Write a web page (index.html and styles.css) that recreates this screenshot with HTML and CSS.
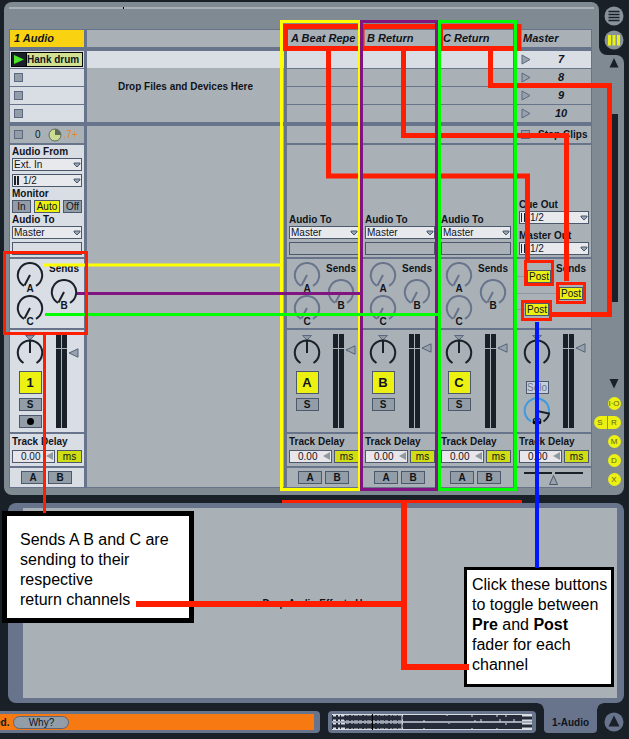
FILE: index.html
```
<!DOCTYPE html>
<html lang="en">
<head>
<meta charset="utf-8">
<title>Sends and Returns</title>
<link rel="stylesheet" href="styles.css">
</head>
<body>
<svg class="defs" aria-hidden="true">
  <symbol id="send" viewBox="0 0 28 30">
    <path d="M8 23.8A12.2 12.2 0 1 1 20 23.8M14 13L8.5 23.5" fill="none" stroke="currentColor" stroke-width="2"/>
  </symbol>
  <symbol id="pan" viewBox="0 0 28 33">
    <path d="M9.500 1.500H18.500L14 6Z" fill="#8f99a4" stroke="#5c6880"/>
    <path d="M7.500 29A12.200 12.200 0 1 1 20.500 29M14 7V19" fill="none" stroke="#1a2028" stroke-width="2"/>
  </symbol>
  <symbol id="down" viewBox="0 0 8 6"><path d="M1 1H7V2L4 5L1 2Z" fill="#9aa5b2" stroke="#4c586c"/></symbol>
  <symbol id="fader" viewBox="0 0 11 10"><path d="M1 5L10 .8V9.200Z" fill="#97a2ac" stroke="#566278"/></symbol>
  <symbol id="launch" viewBox="0 0 10 11"><path d="M1 1L9 5.500L1 10Z" fill="#97a2ac" stroke="#5c6880"/></symbol>
  <symbol id="nudge" viewBox="0 0 8 10"><path d="M0 5L7 1V9Z" fill="#8f99a2"/></symbol>
</svg>

<main class="app">
  <section class="session">
    <div class="board">
      <div class="overview"><i></i></div>
      <div class="tracks">

        <article class="track track-input">
          <h2 class="cell head">1 Audio</h2>
          <div class="cell slot"><div class="clip"><button class="play" aria-label="Play clip"><svg viewBox="0 0 14 13"><path d="M2 2L12 6.500L2 11Z" fill="#4ee62a"/></svg></button><span>Hank drum v</span></div></div>
          <div class="cell slot"><button class="stop" aria-label="Stop"></button></div>
          <div class="cell slot"><button class="stop" aria-label="Stop"></button></div>
          <div class="cell slot last"><button class="stop" aria-label="Stop"></button></div>
          <div class="cell status"><button class="stop" aria-label="Stop track"></button><span class="count">0</span><svg class="pie" viewBox="0 0 14 14"><circle cx="7" cy="7" r="6" fill="#ccdc92" stroke="#5f6c5c"/><path d="M7 7V1A6 6 0 0 1 13 7Z" fill="#5f6c5c"/></svg><span class="bars">.7+</span></div>
          <div class="cell io">
            <label for="from">Audio From</label>
            <div class="pick"><select id="from"><option>Ext. In</option></select><svg><use href="#down"/></svg></div>
            <div class="pick metered next"><select aria-label="Input channel"><option>1/2</option></select><svg><use href="#down"/></svg><i></i></div>
            <label>Monitor</label>
            <div class="monitor"><button>In</button><button class="on">Auto</button><button>Off</button></div>
            <label for="to1">Audio To</label>
            <div class="pick"><select id="to1"><option>Master</option></select><svg><use href="#down"/></svg></div>
            <div class="blank"></div>
          </div>
          <div class="cell sends">
            <div class="left"><div class="knob"><svg><use href="#send"/></svg><b>A</b></div><div class="knob"><svg><use href="#send"/></svg><b>C</b></div></div>
            <div class="right"><h3>Sends</h3><div class="knob"><svg><use href="#send"/></svg><b>B</b></div></div>
          </div>
          <div class="cell mix">
            <div class="strip"><svg class="pan"><use href="#pan"/></svg><button class="active">1</button><button class="small">S</button><button class="small" aria-label="Arm"><i class="dot"></i></button></div>
            <div class="meter"></div><svg class="fader low"><use href="#fader"/></svg>
          </div>
          <div class="cell delay"><label for="d1">Track Delay</label><div class="row"><div class="num"><input id="d1" value="0.00"><svg><use href="#nudge"/></svg></div><button>ms</button></div></div>
          <div class="cell cross"><button>A</button><button>B</button></div>
        </article>

        <div class="drop">
          <div class="cell head"></div>
          <div class="scene"></div>
          <div class="files">Drop Files and Devices Here</div>
          <div class="rest"></div>
        </div>

        <article class="track">
          <h2 class="cell head">A Beat Repe</h2>
          <div class="cell slot lit"></div><div class="cell slot"></div><div class="cell slot"></div><div class="cell slot last"></div>
          <div class="cell status"></div>
          <div class="cell io">
            <label for="toa">Audio To</label>
            <div class="pick"><select id="toa"><option>Master</option></select><svg><use href="#down"/></svg></div>
            <div class="blank"></div>
          </div>
          <div class="cell sends">
            <div class="left"><div class="knob"><svg><use href="#send"/></svg><b>A</b></div><div class="knob"><svg><use href="#send"/></svg><b>C</b></div></div>
            <div class="right"><h3>Sends</h3><div class="knob"><svg><use href="#send"/></svg><b>B</b></div></div>
          </div>
          <div class="cell mix">
            <div class="strip"><svg class="pan"><use href="#pan"/></svg><button class="active">A</button><button class="small">S</button></div>
            <div class="meter"></div><svg class="fader mid"><use href="#fader"/></svg>
          </div>
          <div class="cell delay"><label for="da">Track Delay</label><div class="row"><div class="num"><input id="da" value="0.00"><svg><use href="#nudge"/></svg></div><button>ms</button></div></div>
          <div class="cell cross"><button>A</button><button>B</button></div>
        </article>

        <article class="track">
          <h2 class="cell head">B Return</h2>
          <div class="cell slot lit"></div><div class="cell slot"></div><div class="cell slot"></div><div class="cell slot last"></div>
          <div class="cell status"></div>
          <div class="cell io">
            <label for="tob">Audio To</label>
            <div class="pick"><select id="tob"><option>Master</option></select><svg><use href="#down"/></svg></div>
            <div class="blank"></div>
          </div>
          <div class="cell sends">
            <div class="left"><div class="knob"><svg><use href="#send"/></svg><b>A</b></div><div class="knob"><svg><use href="#send"/></svg><b>C</b></div></div>
            <div class="right"><h3>Sends</h3><div class="knob"><svg><use href="#send"/></svg><b>B</b></div></div>
          </div>
          <div class="cell mix">
            <div class="strip"><svg class="pan"><use href="#pan"/></svg><button class="active">B</button><button class="small">S</button></div>
            <div class="meter"></div><svg class="fader"><use href="#fader"/></svg>
          </div>
          <div class="cell delay"><label for="db">Track Delay</label><div class="row"><div class="num"><input id="db" value="0.00"><svg><use href="#nudge"/></svg></div><button>ms</button></div></div>
          <div class="cell cross"><button>A</button><button>B</button></div>
        </article>

        <article class="track">
          <h2 class="cell head">C Return</h2>
          <div class="cell slot lit"></div><div class="cell slot"></div><div class="cell slot"></div><div class="cell slot last"></div>
          <div class="cell status"></div>
          <div class="cell io">
            <label for="toc">Audio To</label>
            <div class="pick"><select id="toc"><option>Master</option></select><svg><use href="#down"/></svg></div>
            <div class="blank"></div>
          </div>
          <div class="cell sends">
            <div class="left"><div class="knob"><svg><use href="#send"/></svg><b>A</b></div><div class="knob"><svg><use href="#send"/></svg><b>C</b></div></div>
            <div class="right"><h3>Sends</h3><div class="knob"><svg><use href="#send"/></svg><b>B</b></div></div>
          </div>
          <div class="cell mix">
            <div class="strip"><svg class="pan"><use href="#pan"/></svg><button class="active">C</button><button class="small">S</button></div>
            <div class="meter"></div><svg class="fader"><use href="#fader"/></svg>
          </div>
          <div class="cell delay"><label for="dc">Track Delay</label><div class="row"><div class="num"><input id="dc" value="0.00"><svg><use href="#nudge"/></svg></div><button>ms</button></div></div>
          <div class="cell cross"><button>A</button><button>B</button></div>
        </article>

        <article class="track track-master">
          <h2 class="cell head">Master</h2>
          <div class="cell slot lit"><svg><use href="#launch"/></svg><em>7</em></div>
          <div class="cell slot"><svg><use href="#launch"/></svg><em>8</em></div>
          <div class="cell slot"><svg><use href="#launch"/></svg><em>9</em></div>
          <div class="cell slot last"><svg><use href="#launch"/></svg><em>10</em></div>
          <div class="cell status"><button class="stop" aria-label="Stop all clips"></button><b>Stop Clips</b></div>
          <div class="cell io">
            <label for="cue">Cue Out</label>
            <div class="pick metered wide"><select id="cue"><option>1/2</option></select><svg><use href="#down"/></svg><i></i></div>
            <label class="spaced" for="out">Master Out</label>
            <div class="pick metered wide"><select id="out"><option>1/2</option></select><svg><use href="#down"/></svg><i></i></div>
          </div>
          <div class="cell sends posts">
            <h3>Sends</h3>
            <div class="post"><button>Post</button></div>
            <div class="post far"><button>Post</button></div>
            <div class="post near"><button>Post</button></div>
          </div>
          <div class="cell mix">
            <div class="strip"><svg class="pan"><use href="#pan"/></svg><button class="solo">Solo</button>
              <svg class="cue" viewBox="0 0 28 30"><path d="M8 24.300A12.200 12.200 0 1 1 25.800 16" fill="none" stroke="#3f9ade" stroke-width="2"/><path d="M14 14L26 16.500Q25.500 21 20.500 24.500" fill="none" stroke="#1a2028" stroke-width="2"/><path d="M10.500 25V22.500Q14 19.500 17.500 22.500V25" fill="none" stroke="#1a2028" stroke-width="1.500"/><circle cx="11.500" cy="25.500" r="1.800"/><circle cx="16.500" cy="25.500" r="1.800"/></svg>
            </div>
            <div class="meter"></div><svg class="fader"><use href="#fader"/></svg>
          </div>
          <div class="cell delay"><label for="dm">Track Delay</label><div class="row"><div class="num"><input id="dm" value="0.00"><svg><use href="#nudge"/></svg></div><button>ms</button></div></div>
          <div class="cell cross"><svg class="xfade" viewBox="0 0 60 14"><path d="M0 2H28M31 2H59" stroke="#1a2028" stroke-width="2"/><path d="M25.500 13.500L29.500 4.500L33.500 13.500Z" fill="#97a2ac" stroke="#4c586c"/></svg></div>
        </article>
      </div>
    </div>

    <aside class="side">
      <div class="views">
        <button aria-label="Arrangement view"><svg viewBox="0 0 20 20"><circle cx="10" cy="10" r="9.500" fill="#87929b"/><path d="M4.500 5.500H15.500M4.500 8.500H15.500M4.500 11.500H15.500M4.500 14.500H15.500" stroke="#1a2028" stroke-width="1.500"/></svg></button>
        <button aria-label="Session view"><svg viewBox="0 0 20 20"><circle cx="10" cy="10" r="9.500" fill="#87929b"/><path d="M5.500 5V15.500M10 5V15.500M14.500 5V15.500" stroke="#eaf012" stroke-width="3"/></svg></button>
      </div>
      <div class="scroll">
        <svg class="arrow" viewBox="0 0 10 10"><path d="M5 0L9.500 9.500H.5Z" fill="#1a2028"/></svg>
        <div class="thumb"></div>
        <svg class="arrow" viewBox="0 0 10 10"><path d="M5 9.500L9.500 0H.5Z" fill="#1a2028"/></svg>
        <div class="toggles">
          <button>I·O</button>
          <div class="pair"><button>S</button><button>R</button></div>
          <button>M</button><button>D</button><button>X</button>
        </div>
      </div>
    </aside>
  </section>

  <section class="devices"><div>Drop Audio Effects Here</div></section>

  <footer class="foot">
    <div class="info"><div><b>ed.</b><button>Why?</button></div></div>
    <div class="wave"><svg viewBox="0 0 200 16" preserveAspectRatio="none">
      <path d="M0 0H200V16H0Z" fill="#d9dde4"/>
      <path d="M0 4H200M0 12H200" stroke="#262c3a" stroke-width="3"/>
      <path d="M12 4H70M14 12H70" stroke="#262c3a" stroke-width="5"/>
      <path d="M0 4H70M0 12H70" stroke="#262c3a" stroke-width="6" stroke-dasharray="1 3 2 2 1 4"/>
      <path d="M71 4H190M71 12H190" stroke="#262c3a" stroke-width="6"/>
      <path d="M0 8H200" stroke="#68738c"/>
      <path d="M92 6V8M115 1V2M117 9V10M140 1V3M143 6V8M149 5V8M165 1V3M168 5V8M174 0V3M182 5V8M174 9V11M70 0V16M92 14V16M140 14V16M165 14V16" stroke="#d9dde4"/>
      <path d="M40.500 0V16" stroke="#000"/>
    </svg></div>
    <div class="tab">1-Audio</div>
    <button class="hide" aria-label="Hide device view"><svg viewBox="0 0 20 20"><circle cx="10" cy="10" r="9.500" fill="#68738c"/><path d="M10 3.500L15.500 14.500H4.500Z" fill="#1a2028"/></svg></button>
  </footer>

  <p class="note note-sends">Sends A B and C are<br>sending to their<br>respective<br>return channels</p>
  <p class="note note-post">Click these buttons<br>to toggle between<br><b>Pre</b> and <b>Post</b><br>fader for each<br>channel</p>

  <svg class="marks" viewBox="0 0 629 739" fill="none" aria-hidden="true">
    <g stroke="#ff1e00">
      <path d="M283 26.500H521M283 48.500H521M285.500 24V51M519 24V51" stroke-width="5"/>
      <path d="M363.500 29V46M442 29V46" stroke-width="2"/>
      <path d="M328.500 51V176H527.500V262M403.500 51V135.500H566.500V281M490.500 51V85.500H609.500V314.500H551" stroke-width="5"/>
      <path d="M282 501.500H522" stroke-width="3"/>
      <path d="M404 503V667H469M136 604H404" stroke-width="6"/>
    </g>
    <path d="M281.500 21.500H359.500V489.500H281.500ZM43 265H281" stroke="#ffff00" stroke-width="3"/>
    <path d="M361.500 21.500H436.500V489.500H361.500ZM77 293.500H361" stroke="#821482" stroke-width="3"/>
    <path d="M439.500 21.500H515.500V489.500H439.500Z" stroke="#00ff00" stroke-width="3"/>
    <path d="M45 314.500H439" stroke="#00ff00" stroke-width="3"/>
    <path d="M4.500 252.500H86.500V333.500H4.500ZM44.500 335V513M525.500 261.500H552.500V284.500H525.500ZM557.500 283.500H584.500V302.500H557.500ZM522.500 301.500H550.500V319.500H522.500Z" stroke="#ff1e00" stroke-width="3"/>
    <path d="M537 322V568" stroke="#0018ff" stroke-width="4"/>
  </svg>
</main>
</body>
</html>
```
FILE: styles.css
```
:root {
  --dark: #1a2028;
  --panel: #7f8a93;
  --slate: #68738c;
  --gray: #a9b1b7;
  --light: #d9dde4;
  --line: #4c586c;
  --button: #939da7;
  --yellow: #ecf112;
}
* { box-sizing: border-box; }
html { background: var(--dark); }
body {
  margin: 0;
  color: #10141c;
  font: 10px/13px "Liberation Sans", Arial, sans-serif;
}
h2, h3, p { margin: 0; font-size: 10px; }
button, input, select {
  margin: 0;
  padding: 0;
  border: 1px solid var(--line);
  border-radius: 0;
  background: var(--button);
  color: #10141c;
  font: inherit;
}
svg { display: block; flex: none; }
.defs { position: absolute; width: 0; height: 0; }
.app { position: relative; padding-top: 2px; overflow: hidden; }

/* Session view */
.session { display: flex; padding-left: 4px; }
.board {
  flex: 1;
  min-width: 0;
  padding: 5px 7px 7px 5px;
  background: var(--panel);
  border-radius: 8px 8px 0 8px;
}
.overview { height: 2px; margin: 0 -2px 20px 0; padding-left: 114px; background: var(--gray); }
.overview i { display: block; width: 1px; height: 2px; background: #000; }
.tracks { display: flex; gap: 2px; padding: 1px; background: var(--slate); }
.track { flex: none; width: 74px; }
.track-input { margin-right: 1px; }
.track-master { margin-left: 2px; }
.cell { background: var(--gray); margin-bottom: 2px; }
.cell:last-child { margin-bottom: 0; }
.cell.head {
  height: 17px;
  margin-bottom: 4px;
  padding-left: 4px;
  font-style: italic;
  font-size: 11px;
  line-height: 17px;
  white-space: nowrap;
}
.track-master .head { padding-left: 6px; }
.track-input .cell { background: var(--light); }
.track-input .head { background: #f9d311; }
.track-input .status { background: var(--gray); }
.cell.slot { display: flex; align-items: center; height: 17px; margin-bottom: 1px; padding-left: 4px; }
.cell.slot.last { margin-bottom: 4px; }
.slot.lit { background: var(--light); }
.slot svg { width: 10px; height: 11px; }
.slot em { width: 66px; text-align: center; font-size: 11px; font-weight: bold; }
.stop { flex: none; width: 9px; height: 9px; border-color: #5c6880; }
.clip {
  display: flex;
  width: 72px;
  height: 15px;
  margin-left: -3px;
  border: 1px solid #000;
  background: #d2e092;
  font-weight: bold;
  white-space: nowrap;
  overflow: hidden;
}
.clip .play { flex: none; width: 15px; border: 0; border-right: 1px solid #000; background: var(--dark); }
.clip .play svg { width: 14px; height: 13px; }
.status { display: flex; align-items: center; height: 17px; padding-left: 4px; }
.count { margin-left: 12px; }
.pie { width: 14px; height: 14px; margin: 0 2px 0 7px; }
.bars { color: #f08028; }
.status b { margin-left: 8px; white-space: nowrap; }

.drop { flex: 1; min-width: 0; display: flex; flex-direction: column; margin-right: 1px; }
.scene { height: 17px; background: var(--light); }
.files {
  height: 54px;
  margin-bottom: 4px;
  padding-top: 12px;
  background: var(--gray);
  font-weight: bold;
  text-align: center;
}
.rest { flex: 1; background: var(--gray); }

/* Routing */
.io { display: flex; flex-direction: column; justify-content: flex-end; height: 112px; padding: 0 2px 2px; }
.io label, .delay label { font-weight: bold; white-space: nowrap; }
.io .spaced { margin-top: 5px; }
.pick { position: relative; height: 13px; }
.pick.next { margin-top: 3px; }
.pick select {
  display: block;
  width: 100%;
  height: 13px;
  padding-left: 1px;
  background: #e8e9ec;
  line-height: 11px;
  appearance: none;
}
.pick svg { position: absolute; right: 1px; top: 4px; width: 8px; height: 6px; pointer-events: none; }
.pick.metered select { padding-left: 10px; }
.pick i { position: absolute; left: 2px; top: 2px; width: 5px; height: 9px; border: solid var(--dark); border-width: 0 2px; }
.pick.wide i { border-width: 0 2px 0 1px; }
.monitor { display: flex; justify-content: space-between; }
.monitor button { width: 19px; height: 13px; line-height: 11px; }
.monitor .on { width: 26px; background: var(--yellow); }
.blank { height: 13px; margin-top: 3px; border: 1px solid var(--line); }

/* Sends */
.sends { display: flex; height: 69px; }
.sends .left { width: 40px; padding: 3px 6px; }
.sends .right { width: 28px; }
.sends h3 { height: 20px; line-height: 20px; white-space: nowrap; }
.sends .right h3 { display: flex; justify-content: center; }
.knob { width: 28px; height: 33px; color: var(--slate); text-align: center; }
.track-input .knob { color: var(--dark); }
.knob svg { width: 28px; height: 30px; }
.knob b { display: block; margin-top: -10px; line-height: 13px; color: #10141c; }
.sends.posts { display: block; }
.posts h3 { height: 11px; padding-left: 39px; }
.posts .post {
  display: flex;
  height: 13px;
  padding-left: 10px;
  background: linear-gradient(#8f99a6, #8f99a6) 0 6px / 12px 1px no-repeat;
}
.post button { width: 24px; background: var(--yellow); line-height: 11px; }
.posts .far { margin-top: 4px; padding-left: 42px; background-size: 42px 1px; }
.posts .near { margin-top: 3px; padding-left: 8px; background-size: 8px 1px; }

/* Mixer */
.mix { display: flex; height: 102px; padding: 4px 0 4px 6px; }
.strip { display: flex; flex-direction: column; align-items: center; width: 28px; margin-right: 12px; }
.pan { width: 28px; height: 33px; }
.strip button { flex: none; width: 23px; height: 13px; margin-top: 4px; line-height: 11px; font-weight: bold; }
.strip .active { height: 23px; background: var(--yellow); font-size: 13px; }
.strip .solo { margin-top: 14px; background: #c4cede; color: #6c7688; font-weight: normal; }
.strip .cue { width: 28px; height: 30px; margin-top: 3px; }
.dot { display: block; width: 7px; height: 7px; margin: auto; border-radius: 50%; background: #000; }
.meter {
  width: 11px;
  background:
    linear-gradient(var(--gray), var(--gray)) 0 14px / 11px 1px no-repeat,
    linear-gradient(90deg, var(--dark) 5px, var(--gray) 5px 6px, var(--dark) 6px);
}
.fader { width: 11px; height: 10px; margin: 9px 0 0 1px; }
.fader.mid { margin-top: 11px; }
.fader.low { margin-top: 14px; }

.delay { height: 32px; padding: 1px 2px; }
.delay label { display: block; height: 15px; }
.delay .row { display: flex; justify-content: space-between; }
.num { position: relative; width: 43px; }
.num input { display: block; width: 43px; height: 13px; padding-left: 8px; background: #e8e6ea; }
.num svg { position: absolute; right: 1px; top: 1px; width: 8px; height: 10px; }
.delay button { width: 25px; height: 13px; line-height: 11px; background: #d0dc14; }
.cross { display: flex; gap: 3px; height: 19px; padding: 3px 0 0 11px; }
.cross button { width: 24px; height: 13px; line-height: 11px; font-weight: bold; }
.xfade { width: 60px; height: 14px; margin-left: -4px; }

/* Side column */
.side { display: flex; flex-direction: column; width: 30px; margin-top: -2px; background: linear-gradient(var(--panel), var(--panel)) 0 100% / 10px 450px no-repeat; }
.views {
  display: flex;
  flex-direction: column;
  align-items: center;
  gap: 4px;
  height: 55px;
  padding-top: 6px;
  background: var(--dark);
  border-bottom-left-radius: 8px;
}
.views button, .hide { width: 20px; height: 20px; border: 0; background: none; }
.scroll {
  flex: 1;
  display: flex;
  flex-direction: column;
  align-items: center;
  width: 25px;
  padding: 3px 0 0 5px;
  background: var(--panel);
  border-radius: 0 8px 8px 0;
}
.arrow { width: 10px; height: 10px; }
.thumb { width: 8px; height: 188px; margin: 46px 0 77px; background: var(--dark); }
.toggles { display: flex; flex-direction: column; align-items: flex-end; gap: 6px; margin-top: 8px; }
.toggles button {
  width: 13px;
  height: 13px;
  border: 0;
  border-radius: 50%;
  background: var(--yellow);
  color: #5c6420;
  font-size: 8px;
  line-height: 13px;
  text-align: center;
}
.pair { display: flex; gap: 1px; margin-left: -14px; }
.pair button:first-child { border-radius: 7px 0 0 7px; }
.pair button:last-child { border-radius: 0 7px 7px 0; }

/* Device view and footer */
.devices { margin: 8px 5px 0 8px; padding: 5px 7px 5px 15px; background: var(--slate); border-radius: 8px; }
.devices div {
  display: flex;
  align-items: center;
  justify-content: center;
  height: 190px;
  background: var(--gray);
  font-weight: bold;
}
.foot { display: flex; align-items: flex-end; height: 36px; padding-bottom: 6px; }
.info { flex: 1; padding: 3px 6px 3px 0; height: 22px; margin-right: 8px; background: var(--slate); border-radius: 0 4px 4px 0; }
.info div { display: flex; align-items: center; height: 16px; margin-left: -5px; background: #f77912; }
.info button { width: 56px; height: 13px; margin-left: 4px; border-color: #5c6478; border-radius: 7px; line-height: 11px; }
.wave { width: 208px; height: 22px; padding: 3px 4px; background: var(--slate); border-radius: 4px; }
.wave svg { width: 200px; height: 16px; }
.tab {
  position: relative;
  width: 53px;
  height: 30px;
  margin: 0 7px 0 8px;
  padding-top: 13px;
  background: var(--slate);
  border-radius: 0 0 4px 4px;
  font-weight: bold;
  text-align: center;
}
.tab::before, .tab::after {
  content: "";
  position: absolute;
  top: 0;
  width: 6px;
  height: 6px;
}
.tab::before { right: 100%; background: radial-gradient(circle at 0 100%, var(--dark) 5px, var(--slate) 6px); }
.tab::after { left: 100%; background: radial-gradient(circle at 100% 100%, var(--dark) 5px, var(--slate) 6px); }
.hide { margin: 0 5px 1px 0; }

/* Annotations */
.note {
  position: absolute;
  background: #fff;
  border: 5px solid #000;
  color: #000;
  font-size: 16px;
  line-height: 20px;
  white-space: nowrap;
}
.note-sends { left: 2px; top: 511px; width: 192px; height: 112px; padding: 14px 13px; }
.note-post { left: 464px; top: 567px; width: 150px; height: 120px; padding: 5px; border-width: 3px; }
.marks { position: absolute; left: 0; top: 0; width: 629px; height: 739px; pointer-events: none; }
```
